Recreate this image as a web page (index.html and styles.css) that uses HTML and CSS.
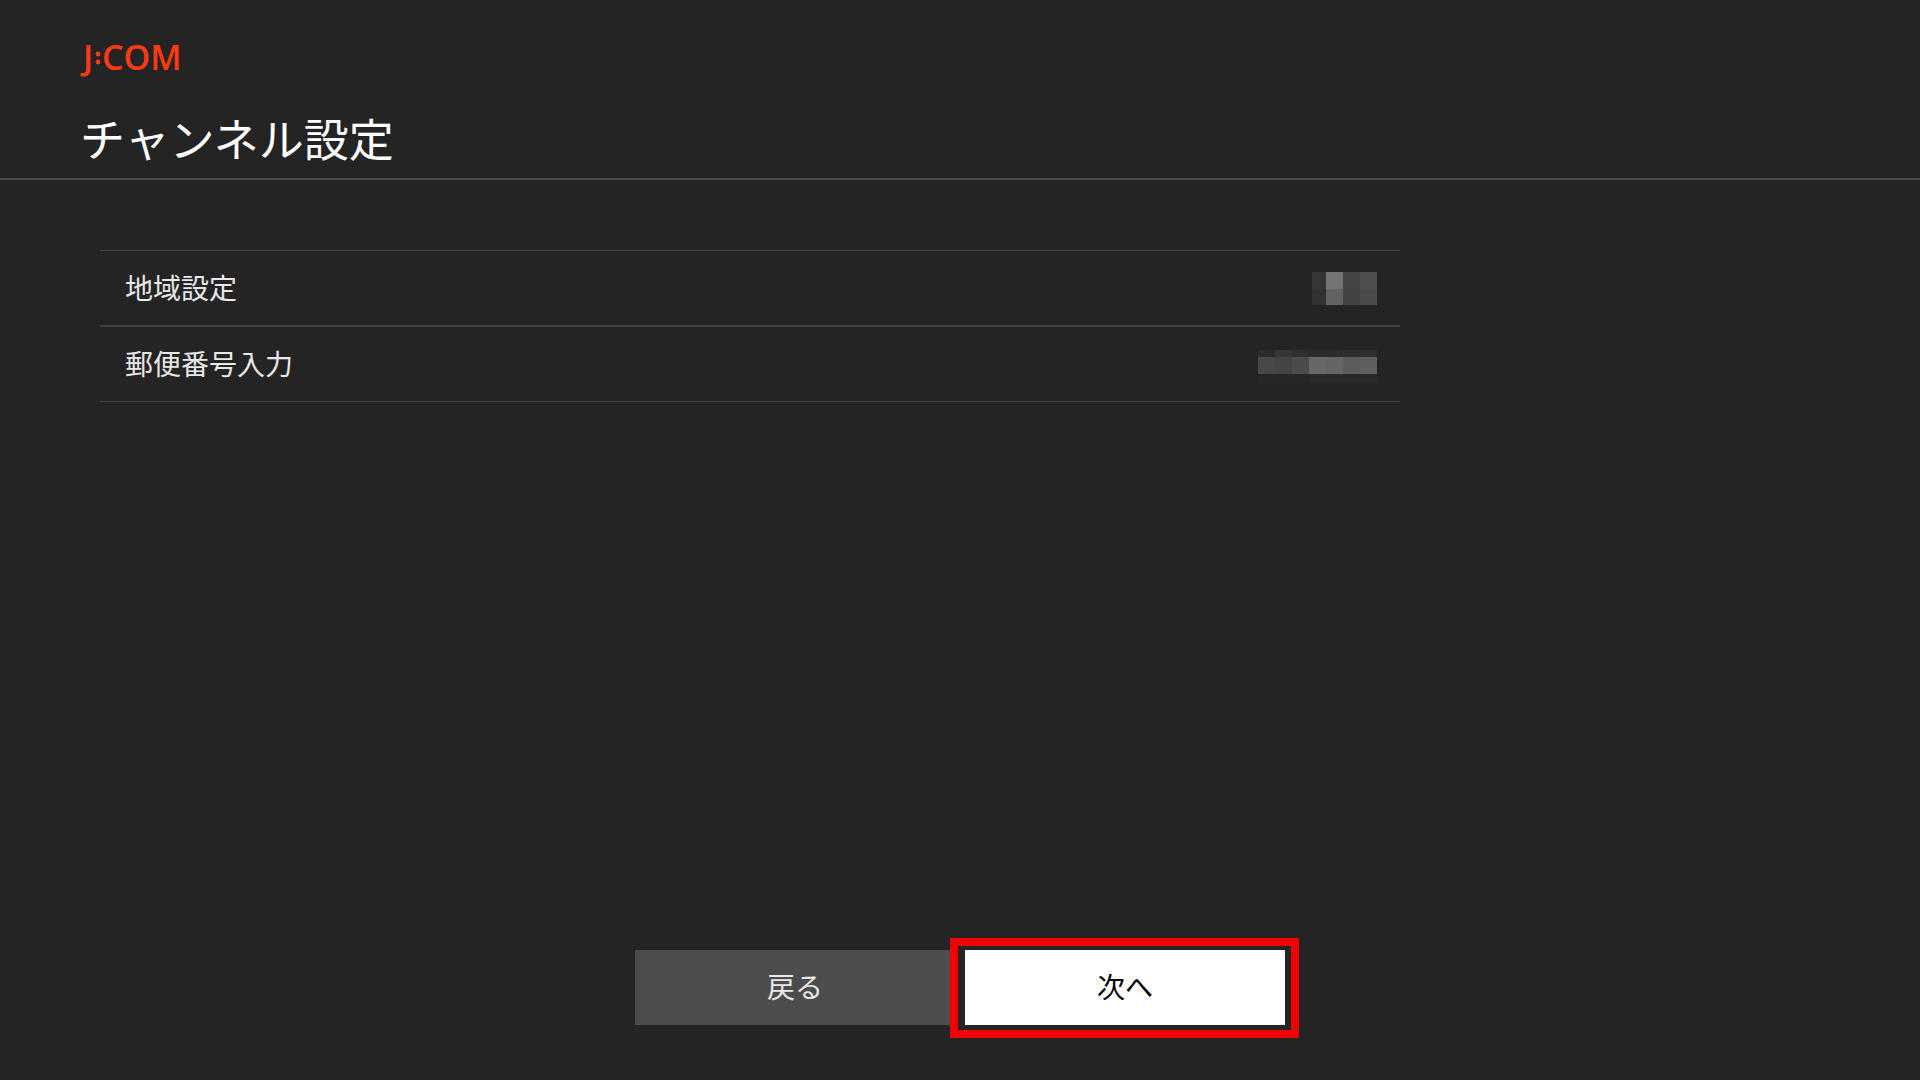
FILE: index.html
```html
<!DOCTYPE html>
<html lang="ja">
<head>
    <meta charset="UTF-8">
    <meta name="viewport" content="width=device-width, initial-scale=1.0">
    <title>チャンネル設定</title>
    <link rel="stylesheet" href="styles.css">
</head>
<body>
    <header>
        <svg class="logo" width="110" height="60" viewBox="0 0 110 60" role="img" aria-label="J:COM">
            <text x="3" y="40">J</text>
            <circle cx="18" cy="24" r="2.4"/>
            <circle cx="18" cy="32" r="2.4"/>
            <text x="22" y="40">COM</text>
        </svg>
        <h1>チャンネル設定</h1>
    </header>
    <main>
        <dl class="settings">
            <div class="row">
                <dt>地域設定</dt>
                <dd>
                    <!-- masked value -->
                    <svg width="65" height="33" shape-rendering="crispEdges" aria-hidden="true">
                        <rect x="0" y="0" width="14" height="17" fill="#363636"/>
                        <rect x="14" y="0" width="17" height="17" fill="#747474"/>
                        <rect x="31" y="0" width="17" height="17" fill="#454545"/>
                        <rect x="48" y="0" width="17" height="17" fill="#4e4e4e"/>
                        <rect x="0" y="17" width="14" height="16" fill="#323232"/>
                        <rect x="14" y="17" width="17" height="16" fill="#636363"/>
                        <rect x="31" y="17" width="17" height="16" fill="#434343"/>
                        <rect x="48" y="17" width="17" height="16" fill="#4b4b4b"/>
                    </svg>
                </dd>
            </div>
            <div class="row">
                <dt>郵便番号入力</dt>
                <dd>
                    <!-- masked value -->
                    <svg width="119" height="38" viewBox="0 -5 119 38" shape-rendering="crispEdges" aria-hidden="true">
                        <rect x="0" y="0" width="17" height="7" fill="#2b2b2b"/>
                        <rect x="17" y="0" width="17" height="7" fill="#363636"/>
                        <rect x="34" y="0" width="17" height="7" fill="#2f2f2f"/>
                        <rect x="51" y="0" width="34" height="7" fill="#2c2c2c"/>
                        <rect x="85" y="0" width="34" height="7" fill="#2e2e2e"/>
                        <rect x="0" y="7" width="17" height="17" fill="#484848"/>
                        <rect x="17" y="7" width="17" height="17" fill="#444444"/>
                        <rect x="34" y="7" width="17" height="17" fill="#4b4b4b"/>
                        <rect x="51" y="7" width="17" height="17" fill="#676767"/>
                        <rect x="68" y="7" width="17" height="17" fill="#656565"/>
                        <rect x="85" y="7" width="17" height="17" fill="#5c5c5c"/>
                        <rect x="102" y="7" width="17" height="17" fill="#5e5e5e"/>
                        <rect x="0" y="24" width="51" height="9" fill="#262626"/>
                        <rect x="51" y="24" width="68" height="9" fill="#292929"/>
                    </svg>
                </dd>
            </div>
        </dl>
    </main>
    <footer>
        <button type="button" class="back-btn">戻る</button>
        <button type="button" class="next-btn">次へ</button>
    </footer>
</body>
</html>
```

FILE: styles.css
```css
* {
    box-sizing: border-box;
}
body {
    display: flex;
    flex-direction: column;
    min-height: 100vh;
    margin: 0;
    background-color: #242424;
    color: #e8e8e8;
    font-family: "Noto Sans CJK JP", sans-serif;
    font-size: 28px;
}
header {
    padding: 30px 80px 10px;
    border-bottom: 2px solid #4c4c4c;
}
.logo {
    display: block;
    fill: #ff3a12;
    font-family: "Open Sans", sans-serif;
    font-size: 34px;
    font-weight: 600;
}
h1 {
    margin: 18px 0 0;
    color: #fff;
    font-size: 45px;
    font-weight: 400;
    line-height: 60px;
}
main {
    flex: 1;
    padding: 70px 100px;
}
.settings {
    max-width: 1300px;
    margin: 0;
    border-top: 1px solid #404040;
}
.row {
    display: flex;
    align-items: center;
    justify-content: space-between;
    height: 76px;
    padding: 0 23px 0 25px;
    border-bottom: 2px solid #404040;
}
.row:last-child {
    height: 75px;
    border-bottom-width: 1px;
}
dt {
    padding-bottom: 2px;
}
dd {
    margin: 0;
}
dd svg {
    display: block;
}
footer {
    display: flex;
    justify-content: center;
    gap: 10px;
    padding-bottom: 55px;
}
button {
    width: 320px;
    height: 75px;
    border: none;
    padding: 0 0 3px;
    font-family: inherit;
    font-size: 28px;
    cursor: pointer;
}
.back-btn {
    background-color: #4c4c4c;
    color: #e8e8e8;
}
.next-btn {
    position: relative;
    background-color: #fff;
    color: #000;
}
/* focus frame */
.next-btn::after {
    content: "";
    position: absolute;
    inset: -12px -14px -13px -15px;
    border: 8px solid #f00000;
    box-shadow: inset 0 0 0 4px #242424;
}
```
